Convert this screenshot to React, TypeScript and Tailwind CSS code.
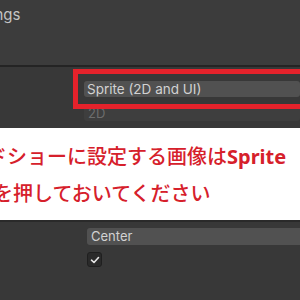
export default function App() {
  return (
    <div className="relative h-[300px] w-[300px] overflow-hidden bg-[#383838] font-['Inter','Noto_Sans',sans-serif]">
      {/* panel header */}
      <div className="h-[65px] bg-[#3c3c3c] pt-[5px]">
        <p className="-ml-[37px] text-[15px] leading-[20px] text-[#c4c4c4]">Settings</p>
      </div>
      <div className="h-[2px] bg-[#242424]" />

      {/* texture type row */}
      <div className="relative h-[61px]">
        <div className="ml-[84px] pt-[14px]">
          <div className="flex h-[16px] items-center rounded-[3px] bg-[#515151] pl-[3px] text-[13.5px] text-[#d2d2d2]">
            Sprite (2D and UI)
          </div>
          <div className="mt-[9px] flex h-[15px] items-center rounded-[3px] bg-[#3e3e3e] pl-[4px] text-[13px] text-[#6d6d6d]">
            2D
          </div>
        </div>
        <div className="absolute -right-[10px] left-[73px] top-[2px] h-[40px] border-[5px] border-[#e5222b]" />
      </div>

      {/* annotation */}
      <div className="h-[92px] bg-white pt-[17px] font-['Noto_Sans_CJK_JP',sans-serif] text-[20px] font-medium leading-[21px] text-[#d6202b] whitespace-nowrap">
        <p className="-ml-[13px]">
          ドショーに設定する画像は<span className="font-['Noto_Sans',sans-serif] font-bold">Sprite</span>
        </p>
        <p className="mt-[15px] -ml-[7px]">を押しておいてください</p>
      </div>

      <div className="h-[2px] bg-[#2a2a2a]" />

      {/* pivot / checkbox rows */}
      <div className="pl-[87px] pt-[6px]">
        <div className="flex h-[17px] items-center rounded-l-[3px] bg-[#515151] pl-[4px] text-[13px] text-[#d2d2d2]">
          Center
        </div>
        <div className="mt-[7px] flex h-[15px] w-[15px] items-center justify-center rounded-[3px] border border-[#1f1f1f] bg-[#2a2a2a]">
          <svg width="10" height="10" viewBox="0 0 10 10" fill="none">
            <path d="M1.5 5.2 L4 7.5 L8.5 2.5" stroke="#e6e6e6" strokeWidth="1.6" strokeLinecap="round" strokeLinejoin="round" />
          </svg>
        </div>
      </div>
    </div>
  );
}
